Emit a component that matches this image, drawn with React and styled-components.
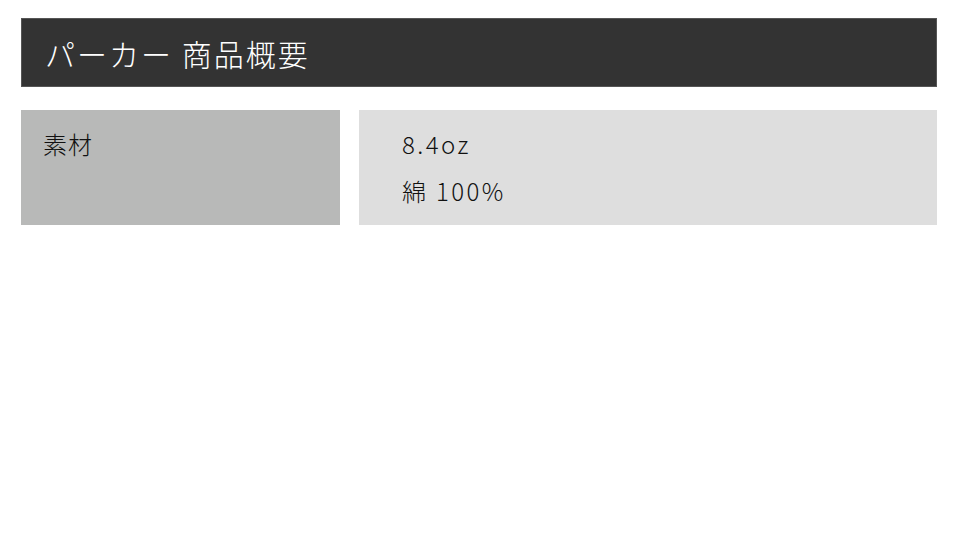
import styled, { createGlobalStyle } from "styled-components";

const GlobalStyle = createGlobalStyle`
  body {
    margin: 0;
    background: #ffffff;
    font-family: "Noto Sans CJK JP", "Noto Sans", sans-serif;
  }
`;

const Page = styled.div`
  padding: 18px 23px 0 21px;
`;

const Title = styled.h1`
  margin: 0;
  height: 69px;
  box-sizing: border-box;
  display: flex;
  align-items: center;
  padding-left: 23px;
  background: #333333;
  border: 1px solid #555555;
  color: #ffffff;
  font-size: 30px;
  font-weight: 300;
  letter-spacing: 2px;
`;

const SpecRow = styled.div`
  display: grid;
  grid-template-columns: 319px 1fr;
  column-gap: 19px;
  margin-top: 23px;
  min-height: 115px;
`;

const Cell = styled.div`
  background: ${(p) => (p.$head ? "#b8b9b8" : "#dedede")};
  padding: 16px ${(p) => (p.$head ? "22px" : "43px")};
  font-size: 24px;
  font-weight: 300;
  line-height: 36px;
  letter-spacing: ${(p) => (p.$head ? "1px" : "2.4px")};
  color: #111111;
`;

const Line = styled.p`
  margin: 0 0 11px;
  &:last-child {
    margin-bottom: 0;
  }
`;

const specs = [{ label: "素材", values: ["8.4oz", "綿 100%"] }];

export default function App() {
  return (
    <>
      <GlobalStyle />
      <Page>
        <Title>パーカー 商品概要</Title>
        {specs.map((s) => (
          <SpecRow key={s.label}>
            <Cell $head>{s.label}</Cell>
            <Cell>
              {s.values.map((v) => (
                <Line key={v}>{v}</Line>
              ))}
            </Cell>
          </SpecRow>
        ))}
      </Page>
    </>
  );
}
